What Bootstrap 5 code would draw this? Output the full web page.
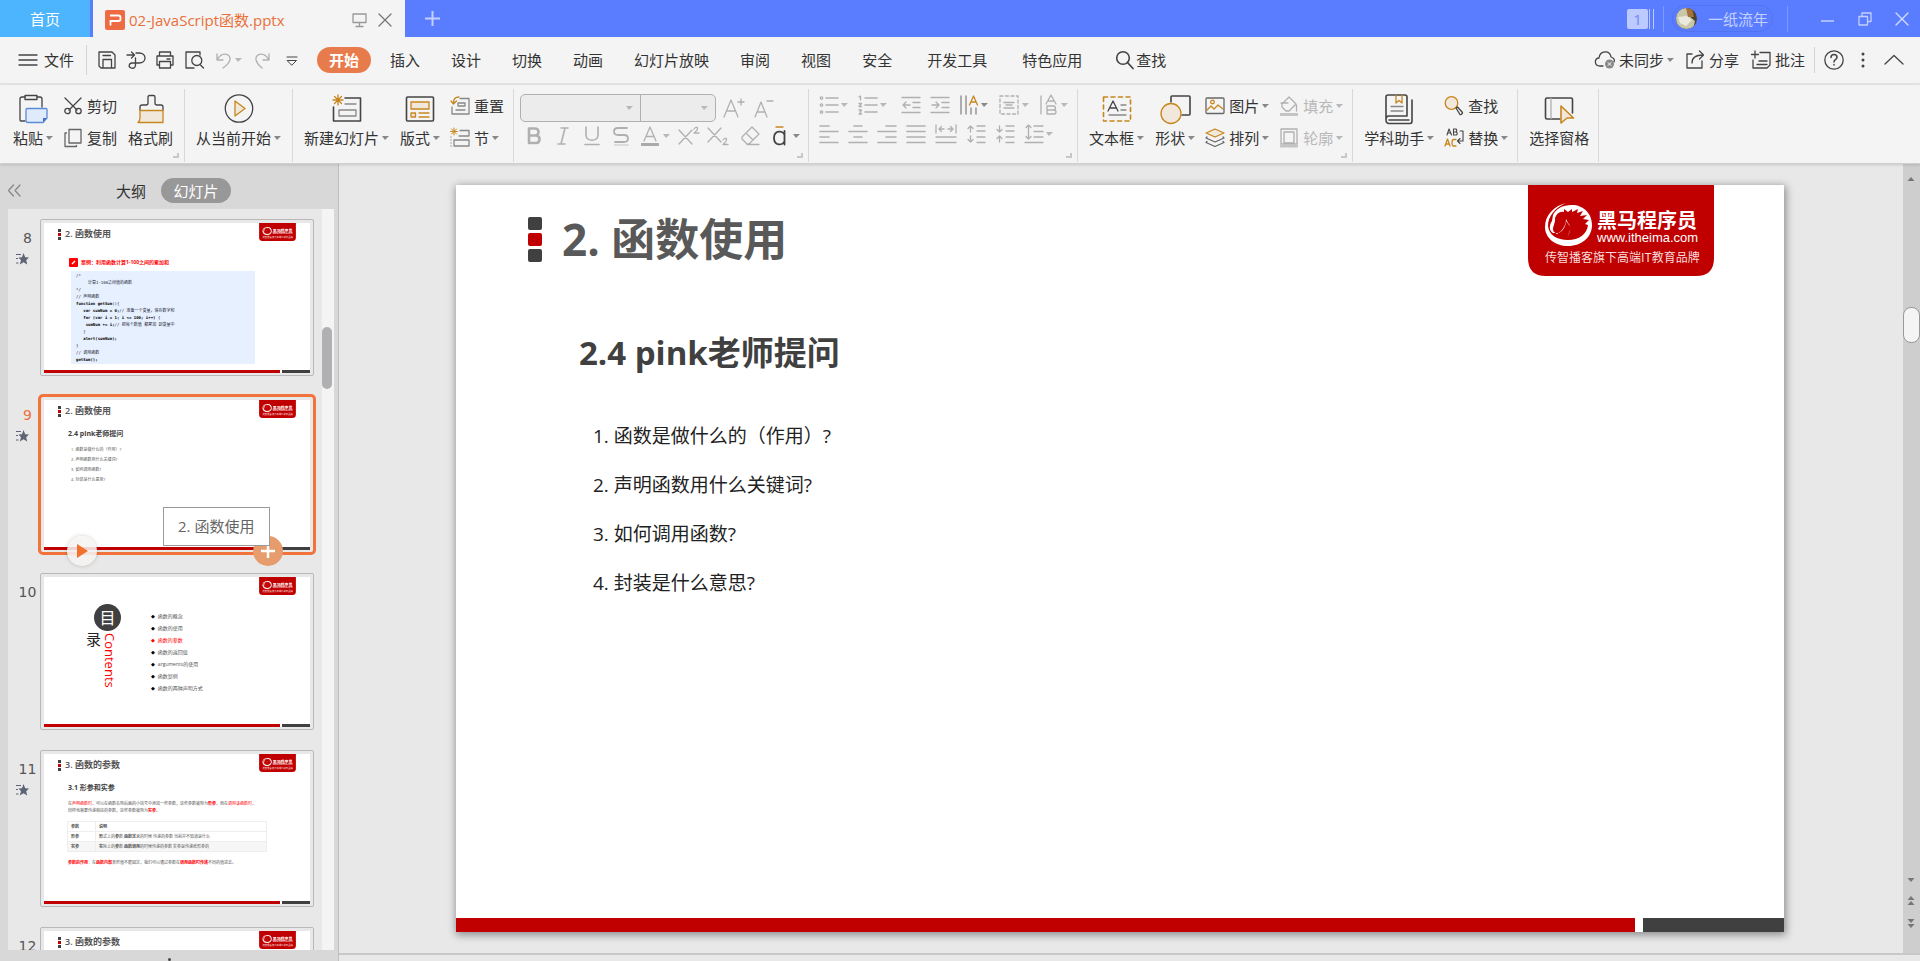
<!DOCTYPE html>
<html lang="zh-CN">
<head>
<meta charset="utf-8">
<meta name="viewport" content="width=device-width, initial-scale=1">
<title>02-JavaScript函数.pptx</title>
<link href="https://cdn.jsdelivr.net/npm/bootstrap@5.3.0/dist/css/bootstrap.min.css" rel="stylesheet">
<style>
  body { font-family: "Open Sans", "Noto Sans CJK SC", sans-serif; font-size: 15px; line-height: 22px; color: #333; background: #e8e8e8; }
  button { border: 0; background: none; padding: 0; color: inherit; font: inherit; display: inline-flex; align-items: center; white-space: nowrap; flex-shrink: 0; }
  svg { flex-shrink: 0; overflow: visible; }
  .ln { fill: none; stroke: #444; stroke-width: 1.3; stroke-linecap: round; stroke-linejoin: round; }
  .gy { stroke: #b0b0b0; }
  .md { stroke: #888; }
  .og { stroke: #c8861f; }
  .of { stroke: #c8861f; fill: #f1e8db; }
  .i18 { width: 18px; height: 18px; }
  .i20 { width: 20px; height: 18px; }
  .i30 { width: 30px; height: 32px; }
  .caret::after { content: ""; border: 4px solid transparent; border-top-color: #888; border-bottom: 0; border-left-width: 3px; border-right-width: 4px; margin-left: 3px; }
  .off { color: #b8b8b8; }
  .off.caret::after { border-top-color: #b8b8b8; }

  .titlebar { height: 37px; background: #5a7dff; color: #c3d0ff; }
  .tab-home { width: 90px; background: #4db5fe; color: #fff; justify-content: center; align-self: stretch; }
  .tab-file { width: 312px; margin-left: 3px; padding: 2px 14px 0 12px; background: #f4f4f4; color: #e8703a; align-self: stretch; }
  .bar-v { width: 1px; height: 26px; background: #7d99ff; }
  .badge-n { width: 21px; height: 20px; border-radius: 2px; background: #bccaff; color: #6c8aff; text-align: center; line-height: 20px; }
  .badge-lines { width: 5px; height: 20px; margin-left: 1px; border-left: 1px solid #bccaff; border-right: 1px solid #bccaff; }
  .user-pill { height: 27px; padding: 0 4px 0 3px; gap: 11px; border: 1px solid #5173f2; border-radius: 14px; }

  .menubar { height: 48px; background: #f4f4f4; border-bottom: 2px solid #e5e5e5; padding: 0 17px 0 19px; }
  .sep { width: 1px; background: #d4d4d4; flex-shrink: 0; }
  .quick { gap: 11px; }
  .menus { gap: 31px; margin-left: 19px; }
  .pill-on { height: 26px; width: 54px; border-radius: 13px; background: #e87b4b; color: #fff; font-weight: 700; justify-content: center; margin-left: 17px; }

  .ribbon { height: 79px; background: #f4f4f4; border-bottom: 1px solid #cfcfcf; position: relative; z-index: 2; box-shadow: 0 1px 3px #0002; }
  .grp { padding: 4px 9px 0 11px; gap: 11px; border-right: 1px solid #d9d9d9; height: 73px; margin-top: 4px; position: relative; flex-shrink: 0; }
  .grp.wide { padding-right: 11px; }
  .grp.first { padding-left: 13px; }
  .grp.font { padding-left: 6px; padding-right: 8px; }
  .grp.corner::after { content: ""; position: absolute; right: 5px; bottom: 4px; width: 6px; height: 5px; border: solid #c8c8c8; border-width: 0 2px 2px 0; }
  .big { flex-direction: column; gap: 2px; align-self: flex-start; }
  .big span { display: inline-flex; align-items: center; }
  .pair { display: flex; flex-direction: column; gap: 8px; padding-top: 1px; }
  .pair.tight { gap: 2px; }
  .pair.snug { gap: 5px; padding-top: 0; }
  .pair button { height: 24px; gap: 0; }
  .pair button svg.t { margin-right: 5px; }
  .pair .line-row { display: flex; height: 24px; align-items: center; }
  .combo { width: 196px; height: 28px; border: 1px solid #b0b0b0; border-radius: 5px; background: #ececec; overflow: hidden; }
  .pick { appearance: none; border: 0; border-radius: 0; height: 26px; background: transparent; }
  .pick-wrap { display: flex; align-items: center; padding-right: 7px; }

  .side { width: 338px; background: #d8d8d8; flex-shrink: 0; }
  .side-head { height: 45px; padding: 8px 0 0 8px; flex-shrink: 0; }
  .seg-on { height: 25px; width: 70px; border-radius: 13px; background: #989898; color: #fff; justify-content: center; margin-left: 15px; }
  .side-list { margin: 0 4px 0 8px; background: #e8e8e8; overflow: hidden; min-height: 0; }
  .side-scroll { width: 12px; background: #f4f4f4; padding-top: 118px; flex-shrink: 0; }
  .side-thumb { width: 10px; height: 62px; border-radius: 5px; background: #b0b0b2; }
  .thumbs { padding-top: 10px; }
  .thumb-row { height: 177px; position: relative; }
  .num { width: 39px; margin-right: -7px; padding-top: 8px; font: 14px/22px "DejaVu Sans", sans-serif; color: #555; flex-shrink: 0; text-align: center; }
  .num.cur { color: #f0713a; }
  .num svg { display: block; margin: 4px auto 0 8px; }
  .frame { width: 274px; height: 157px; border: 1px solid #b8b8b8; border-radius: 2px; padding: 3px; background: #e8e8e8; }
  .frame.cur { border: 3px solid #f3733c; border-radius: 5px; width: 278px; height: 161px; margin: -2px; }
  .sheet { background: #fff; position: relative; display: flex; flex-direction: column; }
  .sheet.mini { width: 266px; height: 150px; color: #555; }
  .mini .hd { height: 12px; margin: 5px 0 0 14px; gap: 4px; font: 9px/12px "Open Sans", "Noto Sans CJK SC", sans-serif; font-weight: 600; }
  .mini .sq { gap: 1px; }
  .mini .sq i { width: 3px; height: 3px; }
  .mini .logo { position: absolute; right: 14px; top: 0; width: 37px; height: 18px; }
  .mini h3 { font-size: 7px; line-height: 10px; font-weight: 700; margin: 12px 0 0 24px; color: #404040; }
  .mini .ol { font-size: 4px; line-height: 10px; margin: 6px 0 0 27px; }
  .mini .foot { height: 3px; gap: 2px; }
  .sq i { background: #404040; display: block; }
  .sq i:nth-child(2) { background: #c00000; }
  .foot { margin-top: auto; display: flex; }
  .foot b { background: #c00000; flex: 1179 1 0; }
  .foot u { background: #404040; flex: 141 1 0; }
  .case { margin: 18px 0 0 25px; gap: 3px; height: 9px; font-size: 5px; line-height: 9px; font-weight: 700; color: #f00; }
  .code { margin: 4px 0 0 27px; padding: 1px 5px; width: 184px; background: #e6f0ff; font: 4px/7px "DejaVu Sans Mono", "Noto Sans CJK SC", monospace; color: #223; overflow: hidden; }
  .code b { color: #000; }
  .toc-mark { width: 32px; margin: 27px 0 0 42px; }
  .toc-pair { gap: 2px; }
  .toc-disc { width: 27px; height: 27px; border-radius: 50%; background: #404040; color: #fff; font: 16px/27px "Noto Sans CJK SC", sans-serif; text-align: center; margin-left: 8px; }
  .toc-lu { font: 15px/16px "Noto Sans CJK SC", sans-serif; color: #222; }
  .toc-en { writing-mode: vertical-rl; font-size: 13px; line-height: 14px; color: #f00; margin-top: 2px; }
  .toc-list { margin: 33px 0 0 33px; font-size: 5px; line-height: 12px; list-style: none; padding: 0; }
  .toc-list li::before { content: "◆"; font-family: "DejaVu Sans", sans-serif; color: #000; margin-right: 3px; }
  .toc-list li.hot, .toc-list li.hot::before { color: #f00; }
  .para { font-size: 4px; line-height: 7px; margin: 7px 0 0 24px; }
  .para em, .para strong { color: #f00; font-style: normal; }
  .grid-t { margin: 7px 0 0 23px; width: 200px; font-size: 4px; line-height: 9px; border: 1px solid #eee; }
  .grid-t td, .grid-t th { padding: 0 3px; border: 1px solid #eee; }
  .grid-t th:first-child { width: 28px; }
  .grid-t tr:last-child { background: #f6f6f6; }
  .hover-play, .hover-add { position: absolute; width: 30px; height: 30px; border-radius: 50%; top: 140px; z-index: 1; justify-content: center; }
  .hover-play { left: 59px; background: #f6f4f2dd; box-shadow: 0 0 4px #0003; }
  .hover-add { left: 245px; background: #e69c6c; }
  .tip { position: absolute; left: 155px; top: 111px; width: 107px; height: 39px; padding: 7px 0 0 14px; background: #fff; border: 1px solid #9a9a9a; z-index: 2; color: #666; }

  .stage { border-left: 1px solid #bfbfbf; }
  .canvas { padding: 21px 119px 0 117px; min-height: 0; }
  .sheet.full { aspect-ratio: 1328 / 747; box-shadow: 1px 2px 8px 1px #0006; }
  .full .hd { height: 48px; margin: 30px 0 0 72px; gap: 20px; }
  .full .hd h1 { font-size: 44px; line-height: 48px; font-weight: 700; color: #595959; margin: 0; }
  .full .sq { gap: 3px; }
  .full .sq i { width: 14px; height: 13px; border-radius: 2px; }
  .full .logo { position: absolute; right: 70px; top: 0; width: 186px; height: 91px; }
  .full h2 { font-size: 33px; line-height: 44px; font-weight: 700; color: #404040; margin: 68px 0 0 123px; }
  .full .ol { font-size: 19px; line-height: 49px; color: #222; margin: 37px 0 0 137px; padding: 0; list-style: none; }
  .full .foot { height: 14px; gap: 8px; }
  .vscroll { width: 17px; background: #cecece; flex-shrink: 0; padding: 12px 0 25px; }
  .vscroll .knob { width: 17px; height: 36px; border: 1px solid #999; border-radius: 8px; background: #f4f4f4; margin-top: 125px; }
  .vscroll svg { fill: #777; display: block; }
  .stage-foot { height: 8px; border-top: 2px solid #c8c8c8; }
  .side-foot { height: 11px; }
  .dot { width: 3px; height: 3px; border-radius: 50%; background: #444; }
</style>
</head>
<body class="vh-100 d-flex flex-column overflow-hidden">

<svg class="d-none" aria-hidden="true">
  <symbol id="logo" viewBox="0 0 186 91">
    <path d="M0 0H186V73Q186 91 168 91H18Q0 91 0 73Z" fill="#c00000"/>
    <path d="M38 18C26 21 17 30 17 42C17 53 27 61 40 61C54 61 64 52 64 40C64 28 55 20 44 20C34 20 28 24 25 30L24 36C21 40 21 46 25 48L31 48C36 45 38 40 38 36L41 40C44 43 41 47 40 51C42 47 44 42 40 38L38 34C38 41 34 46 29 49L26 47C23 43 28 38 27 33C29 28 32 26 36 27L36 24L40 27L44 24L44 27L50 24L49 28L55 26L52 31L59 30L55 34L61 35L57 39L60 40C59 49 51 55 40 55C29 55 21 50 20 41C20 31 27 23 38 18Z" fill="#fff"/>
    <text x="69" y="43" font-size="20" font-weight="700" fill="#fff" font-family="Noto Sans CJK SC, sans-serif">黑马程序员</text>
    <text x="69" y="57" font-size="13" fill="#fff" font-family="Liberation Sans, sans-serif">www.itheima.com</text>
    <text x="17" y="77" font-size="12" fill="#f6dcdc" font-family="Noto Sans CJK SC, sans-serif">传智播客旗下高端IT教育品牌</text>
  </symbol>
  <symbol id="anim" viewBox="0 0 13 12">
    <path d="M7.500 0L9.200 4.200L13 4.400L10.200 7.200L11.200 11.500L7.500 9.200L3.800 11.500L5 7.200L2.500 4.400L6 4.200Z" fill="#5d6475"/>
    <path d="M0 1.500H5M0 5.500H2M0 10H2.500" stroke="#5d6475" stroke-width="1"/>
  </symbol>
</svg>

<header class="titlebar d-flex align-items-center flex-shrink-0">
  <button class="tab-home">首页</button>
  <div class="tab-file d-flex align-items-center">
    <svg width="20" height="20" viewBox="0 0 20 20"><rect width="20" height="20" rx="2" fill="#ee6a42"/><path d="M5 5.500H13.500Q15.500 5.500 15.500 7.500V9Q15.500 11 13.500 11H5.500V15.500" fill="none" stroke="#fff" stroke-width="1.800"/></svg>
    <span class="ms-1">02-JavaScript函数.pptx</span>
    <svg class="ms-auto" width="15" height="14" viewBox="0 0 15 14"><path d="M1 1H14V9.500H1ZM7.500 9.500V13M4 13.500H11" class="ln" style="stroke:#999"/></svg>
    <button class="ms-2 ps-1" aria-label="关闭标签"><svg width="12" height="12" viewBox="0 0 12 12"><path d="M0 0L12 12M12 0L0 12" class="ln" style="stroke:#777"/></svg></button>
  </div>
  <button style="margin-left:20px" aria-label="新建"><svg width="15" height="15" viewBox="0 0 15 15"><path d="M7.500 0V15M0 7.500H15" stroke="#c3d0ff" stroke-width="2"/></svg></button>
  <div class="ms-auto d-flex align-items-center">
    <div class="badge-n">1</div><div class="badge-lines"></div>
    <div class="bar-v" style="margin:0 8px 0 9px"></div>
    <button class="user-pill">
      <svg width="21" height="21" viewBox="0 0 21 21"><defs><clipPath id="av"><circle cx="10.500" cy="10.500" r="10.500"/></clipPath></defs><g clip-path="url(#av)"><rect width="21" height="21" fill="#4a4330"/><path d="M0 0H11L13 8L19 13L17 21H3L0 16Z" fill="#c9c8a8"/><path d="M10 0H16L18 9L12 9Z" fill="#a5713c"/><path d="M2 9L11 8L16 12L10 18L4 15Z" fill="#eceade"/></g></svg>
      <span>一纸流年</span>
    </button>
    <div class="bar-v" style="margin-left:14px"></div>
    <button style="margin-left:33px" aria-label="最小化"><svg width="13" height="13" viewBox="0 0 13 13"><path d="M0 9H13" stroke="#c3d0ff" stroke-width="1.500"/></svg></button>
    <button class="ms-4" aria-label="还原"><svg width="14" height="14" viewBox="0 0 14 14"><path d="M1 4.500H9.500V13H1ZM4 4V1H13V9.500H10" class="ln" style="stroke:#c3d0ff"/></svg></button>
    <button class="ms-4 me-2 pe-1" aria-label="关闭"><svg width="12" height="12" viewBox="0 0 12 12"><path d="M0 0L12 12M12 0L0 12" class="ln" style="stroke:#d4deff"/></svg></button>
  </div>
</header>

<nav class="menubar d-flex align-items-center flex-shrink-0">
  <button><svg class="i18" viewBox="0 0 18 18" style="margin-right:7px"><path d="M0 4H18M0 9H18M0 14H18" class="ln"/></svg>文件</button>
  <div class="sep" style="height:30px;margin:0 11px 0 12px"></div>
  <div class="quick d-flex align-items-center">
    <button aria-label="保存"><svg class="i18" viewBox="0 0 18 18"><path d="M1 1H14L17 4V17H3L1 15ZM5 17V8.500H13.500V17M5 4.500H12.500" class="ln"/></svg></button>
    <button aria-label="输出为PDF"><svg class="i18" viewBox="0 0 18 18"><path d="M0 4H7M4.500 1L7.500 4L4.500 7M9 2H12C20 2 20 12 12 12H5C2 12 1 16 4 17C7 18 9 16 8.500 13V7" class="ln"/></svg></button>
    <button aria-label="打印"><svg class="i18" viewBox="0 0 18 18"><path d="M3.500 5V1H14.500V5M3.500 14H1V5H17V14H14.500M3.500 10.500H14.500V17H3.500ZM11 8H14" class="ln"/></svg></button>
    <button aria-label="打印预览"><svg class="i18" viewBox="0 0 18 18"><path d="M9 17H1V1H15V4M15.500 14L18.500 17" class="ln"/><circle cx="11.800" cy="9.500" r="5" class="ln"/></svg></button>
    <button class="off caret" aria-label="撤销"><svg class="i18" viewBox="0 0 18 18"><path d="M3 3V9H9M3 9C6 3 11 2 14 4C18 7 16 12 9 17" class="ln gy"/></svg></button>
    <button aria-label="恢复"><svg class="i18" viewBox="0 0 18 18"><path d="M16 3V9H10M16 9C13 3 8 2 5 4C1 7 3 12 9 17" class="ln gy"/></svg></button>
    <button aria-label="更多"><svg class="i18" viewBox="0 0 18 18"><path d="M5 6H15M5.500 9.500H14.500L10 14Z" class="ln" style="stroke-width:1"/></svg></button>
  </div>
  <button class="pill-on">开始</button>
  <div class="menus d-flex align-items-center">
    <button>插入</button><button>设计</button><button>切换</button><button>动画</button><button>幻灯片放映</button><button>审阅</button><button>视图</button><button>安全</button>
    <button class="ms-1">开发工具</button><button class="ms-1">特色应用</button>
    <button style="margin-left:3px"><svg class="i18" viewBox="0 0 18 18" style="margin-right:2px"><circle cx="7" cy="7" r="6.300" class="ln" style="stroke-width:1.600"/><path d="M11.500 11.500L17 17.500" class="ln" style="stroke-width:1.800"/></svg>查找</button>
  </div>
  <div class="ms-auto d-flex align-items-center">
    <button class="caret"><svg class="i20" viewBox="0 0 20 18" style="margin-right:4px"><path d="M8 15H5C-1 15 -1 7 4 7C5 -1 15 -1 16 6C19 7 20 9 19 11" class="ln"/><circle cx="14.500" cy="13" r="4.500" fill="#888"/><path d="M12.800 11.300L16.200 14.700M16.200 11.300L12.800 14.700" stroke="#fff"/></svg>未同步</button>
    <button style="margin-left:12px"><svg class="i18" viewBox="0 0 18 18" style="margin-right:5px"><path d="M6 3H1V17H16V10M6 12C6 6 10 4 17 4M13.500 0L17.500 4L13.500 8" class="ln"/></svg>分享</button>
    <button style="margin-left:13px"><svg class="i18" viewBox="0 0 18 18" style="margin-right:5px"><path d="M8 1.500H18V14L15 17H1V9M3 0V7M-.500 3.500H6.500M5 13.500H15M7 10H15" class="ln"/></svg>批注</button>
    <div class="sep" style="height:26px;margin:0 9px"></div>
    <button aria-label="帮助"><svg width="20" height="20" viewBox="0 0 20 20"><circle cx="10" cy="10" r="9.200" class="ln"/><path d="M7 7.500C7 3.500 13 3.500 13 7.500C13 9.500 10 9.500 10 12M10 14.500V15" class="ln" style="stroke-width:1.500"/></svg></button>
    <button style="margin:0 20px 0 17px" aria-label="选项"><svg width="4" height="16" viewBox="0 0 4 16" fill="#444"><circle cx="2" cy="2" r="1.500"/><circle cx="2" cy="8" r="1.500"/><circle cx="2" cy="14" r="1.500"/></svg></button>
    <button aria-label="折叠功能区"><svg class="i18" viewBox="0 0 18 18"><path d="M0 13L9 4.500L18 13" class="ln"/></svg></button>
  </div>
</nav>

<section class="ribbon d-flex flex-shrink-0">
  <div class="grp first wide corner d-flex">
    <button class="big"><svg class="i30" viewBox="0 0 30 32"><path d="M7 28H3Q2 28 2 27V6Q2 4 4 4H7M19 4H22Q24 4 24 6V14" class="ln"/><rect x="7" y="2.500" width="12" height="4" class="ln"/><path d="M9 15.500H28Q29 15.500 29 16.500V25L25 29.500H10Q8 29.500 8 27.500V17Q8 15.500 9 15.500Z" fill="#dfeafa" stroke="#5b8bd6" stroke-width="1.300"/><path d="M29 25H25V29.500Z" fill="#3f74cc"/></svg><span class="caret">粘贴</span></button>
    <div class="pair">
      <button><svg class="i18 t" viewBox="0 0 18 18"><path d="M1 1L13 13M17 1L5 13" class="ln"/><circle cx="3.500" cy="14" r="2.700" class="ln"/><circle cx="14.500" cy="14" r="2.700" class="ln"/></svg>剪切</button>
      <button><svg class="i18 t" viewBox="0 0 18 18"><path d="M5 0.500H17V14H5ZM2.500 4H1V17.500H12.500V16.500" class="ln" style="stroke:#666"/></svg>复制</button>
    </div>
    <button class="big"><svg class="i30" viewBox="0 0 30 32"><path d="M4 17V14Q4 12 6 12H10Q12 12 12 10V4Q12 2.500 13.500 2.500H17.500Q19 2.500 19 4V10Q19 12 21 12H25Q27 12 27 14V17" class="ln"/><path d="M4 17.500H27V29.500H2Q4 28 4 25Z" class="ln of"/></svg><span>格式刷</span></button>
  </div>
  <div class="grp wide d-flex">
    <button class="big"><svg class="i30" viewBox="0 0 30 32"><circle cx="15" cy="15.500" r="13.700" class="ln"/><path d="M11 8L21 15.500L11 23Z" class="ln of"/></svg><span class="caret">从当前开始</span></button>
  </div>
  <div class="grp d-flex">
    <button class="big"><svg class="i30" viewBox="0 0 30 32"><path d="M13 5H28.500V28H1.500V14" class="ln" style="stroke-width:1.600"/><rect x="7" y="17" width="17" height="6" class="ln md"/><path d="M13 11H24" class="ln md"/><path d="M6 2V12M1 7H11M2.500 3.500L9.500 10.500M9.500 3.500L2.500 10.500" class="ln og"/></svg><span class="caret">新建幻灯片</span></button>
    <button class="big"><svg class="i30" viewBox="0 0 30 32"><rect x="1.500" y="4" width="27" height="24" rx="1" class="ln" style="stroke-width:1.600"/><rect x="6" y="9" width="18" height="7" class="ln of"/><rect x="6" y="20" width="4.500" height="4" class="ln of"/><path d="M14 20H24M14 24H24" class="ln og"/></svg><span class="caret">版式</span></button>
    <div class="pair">
      <button><svg class="i18 t" viewBox="0 0 18 18"><path d="M9 1.500H18V17H1V10M7 6H14V9H7ZM5 13H14" class="ln md"/><path d="M8 0C4 0 2.500 2 2.500 6M0 4L2.500 7L5.500 4" class="ln og"/></svg>重置</button>
      <button class="caret"><svg class="i18 t" viewBox="0 0 18 18"><path d="M9 1.500H18V7H8M3 11H18V17H3ZM0 11V11.100M0 14V14.100M0 17V17.100M0 8V8.100" class="ln md"/><path d="M3 -1V6M-.500 2.500H6.500M.500 0L5.500 5M5.500 0L.500 5" class="ln og" style="stroke-width:1"/></svg>节</button>
    </div>
  </div>
  <div class="grp font corner d-flex">
    <div class="pair tight">
      <div class="d-flex align-items-center" style="height:28px">
        <div class="combo d-flex">
          <label class="pick-wrap off caret" style="width:120px;border-right:1px solid #b0b0b0"><select class="pick w-100" aria-label="字体" disabled><option></option></select></label>
          <label class="pick-wrap off caret flex-fill"><select class="pick w-100" aria-label="字号" disabled><option></option></select></label>
        </div>
        <button class="ms-2" aria-label="增大字号"><svg class="i20" viewBox="0 0 20 18"><path d="M0 18L7 1L14 18M2.500 12H11.500M17 0V6M14 3H20" class="ln gy"/></svg></button>
        <button style="margin-left:11px" aria-label="减小字号"><svg class="i20" viewBox="0 0 20 18"><path d="M0 18L6 3L12 18M2 13H10M12 2H18" class="ln gy"/></svg></button>
      </div>
      <div class="line-row" style="gap:9px;padding-left:4px">
        <button aria-label="加粗"><svg class="i20" viewBox="0 0 20 18"><path d="M5 1.500H11Q14.500 1.500 14.500 5Q14.500 8.500 11 8.500H5ZM5 8.500H12Q15.500 8.500 15.500 12.300Q15.500 16 12 16H5Z" class="ln gy" style="stroke-width:2.600"/></svg></button>
        <button aria-label="倾斜"><svg class="i20" viewBox="0 0 20 18"><path d="M8 1H15M5 17H12M12 1L8 17" class="ln gy" style="stroke-width:1.600"/></svg></button>
        <button aria-label="下划线"><svg class="i20" viewBox="0 0 20 18"><path d="M4 0V8C4 15 16 15 16 8V0M3 17.500H17" class="ln gy" style="stroke-width:1.600"/></svg></button>
        <button aria-label="文字阴影"><svg class="i20" viewBox="0 0 20 18"><path d="M17 18H4" class="ln" style="stroke:#dcdcdc;stroke-width:2"/><path d="M16 1H7Q3 1 3 4.500Q3 8 7 8H13Q17 8 17 11.500Q17 15 13 15H4" class="ln gy" style="stroke-width:1.800"/></svg></button>
        <button class="off caret" aria-label="字体颜色"><svg class="i20" viewBox="0 0 20 18"><path d="M4 14L10 0L16 14M6 9.500H14" class="ln gy"/><path d="M1 17.500H19" stroke="#aaa" stroke-width="3"/></svg></button>
        <button aria-label="上标"><svg class="i20" viewBox="0 0 20 18"><path d="M0 3L13 17M13 3L0 17M15 2Q17 -1 18.500 1Q19 3 15 6H20" class="ln gy"/></svg></button>
        <button aria-label="下标"><svg class="i20" viewBox="0 0 20 18"><path d="M0 1L13 15M13 1L0 15M15 13Q17 10 18.500 12Q19 14 15 17.500H20" class="ln gy"/></svg></button>
        <button class="ms-1" aria-label="清除格式"><svg class="i20" viewBox="0 0 20 18"><path d="M1 10L11 0L18 7L8 17H6L1 12ZM5 6L12 13M6 17.500H18" class="ln gy"/></svg></button>
        <button class="caret" aria-label="拼音指南"><svg class="i20" viewBox="0 0 20 18"><path d="M14.500 4V17.500M14.500 8C13 3 4 3 4 11C4 19 13 19 14.500 14" class="ln" style="stroke-width:1.800"/><path d="M6 0H13" class="ln og"/></svg></button>
      </div>
    </div>
  </div>
  <div class="grp corner d-flex">
    <div class="pair snug">
      <div class="line-row" style="gap:11px">
        <button class="off caret" aria-label="项目符号"><svg class="i18" viewBox="0 0 18 18"><path d="M6 2H18M6 9H18M6 16H18" class="ln gy" style="stroke-width:1.600"/><g class="ln gy"><circle cx="1.500" cy="2" r="1.200"/><circle cx="1.500" cy="9" r="1.200"/><circle cx="1.500" cy="16" r="1.200"/></g></svg></button>
        <button class="off caret" aria-label="编号"><svg class="i18" viewBox="0 0 18 18"><path d="M6 2H18M6 9H18M6 16H18" class="ln gy" style="stroke-width:1.600"/><path d="M0 1L1.500 0V4M0 7.500H2.500L0 10.500H2.500M0 14H2.500L1 16L2.500 18H0" class="ln gy"/></svg></button>
        <button class="ms-1" aria-label="减少缩进"><svg class="i18" viewBox="0 0 18 18"><path d="M0 1.500H18M11 6.500H18M11 11.500H18M0 16.500H18M8 9H1M4 6L1 9L4 12" class="ln gy"/></svg></button>
        <button aria-label="增加缩进"><svg class="i18" viewBox="0 0 18 18"><path d="M0 1.500H18M11 6.500H18M11 11.500H18M0 16.500H18M1 9H8M5 6L8 9L5 12" class="ln gy"/></svg></button>
        <button class="caret" aria-label="文字方向"><svg class="i18" viewBox="0 0 18 18"><path d="M1 0V18M6 0V18M11 12V18M16 12V18" class="ln md"/><path d="M9.500 9L13.500 0L17.500 9M11 6H16" class="ln og"/></svg></button>
        <button class="off caret" aria-label="对齐文本"><svg class="i20" viewBox="0 0 20 18"><rect x="1" y="0" width="18" height="18" class="ln gy" stroke-dasharray="3 2.500"/><path d="M5 6.500H15M7 9H13M5 12H15" class="ln gy"/></svg></button>
        <button class="off caret" aria-label="字符间距"><svg class="i18" viewBox="0 0 18 18"><path d="M1 0V18M6 8L11 -1L16 8M8 5H14M7 10H13Q15.500 10 15.500 12Q15.500 14 13 14H7ZM7 14H14Q16 14 16 16Q16 18 14 18H7Z" class="ln gy"/></svg></button>
      </div>
      <div class="line-row" style="gap:11px">
        <button aria-label="左对齐"><svg class="i18" viewBox="0 0 18 18"><path d="M0 1H9M0 6.500H18M0 12H9M0 17.500H18" class="ln gy" style="stroke-width:1.600"/></svg></button>
        <button aria-label="居中"><svg class="i18" viewBox="0 0 18 18"><path d="M5 1H13M0 6.500H18M5 12H13M0 17.500H18" class="ln gy" style="stroke-width:1.600"/></svg></button>
        <button aria-label="右对齐"><svg class="i18" viewBox="0 0 18 18"><path d="M8 1H18M0 6.500H18M8 12H18M0 17.500H18" class="ln gy" style="stroke-width:1.600"/></svg></button>
        <button aria-label="两端对齐"><svg class="i18" viewBox="0 0 18 18"><path d="M0 1H18M0 6.500H18M0 12H18M0 17.500H18" class="ln gy" style="stroke-width:1.600"/></svg></button>
        <button aria-label="分散对齐"><svg class="i20" viewBox="0 0 20 18"><path d="M0 0V8M20 0V8M3 4H8M12 4H17M5.500 1.500L3 4L5.500 6.500M14.500 1.500L17 4L14.500 6.500M0 12H20M0 17.500H20" class="ln gy"/></svg></button>
        <button aria-label="增大段落间距"><svg class="i18" viewBox="0 0 18 18"><path d="M10 1H18M10 6H18M10 12H18M10 17.500H18M3.500 7V1M1 3.500L3.500 1L6 3.500M3.500 11V17M1 14.500L3.500 17L6 14.500" class="ln gy"/></svg></button>
        <button aria-label="减小段落间距"><svg class="i18" viewBox="0 0 18 18"><path d="M10 1H18M10 6H18M10 12H18M10 17.500H18M3.500 7V1M1 4.500L3.500 7L6 4.500M3.500 17V11M1 13.500L3.500 11L6 13.500" class="ln gy"/></svg></button>
        <button class="off caret" aria-label="行距"><svg class="i18" viewBox="0 0 18 18"><path d="M9 1H18M9 6.500H18M9 12H18M0 17.500H18M3.500 14V0M1 2.500L3.500 0L6 2.500M1 11.500L3.500 14L6 11.500" class="ln gy"/></svg></button>
      </div>
    </div>
  </div>
  <div class="grp corner d-flex">
    <button class="big"><svg class="i30" viewBox="0 0 30 32"><rect x="1.500" y="4" width="27" height="24" class="ln og" style="stroke-width:1.600" stroke-dasharray="4 3.500"/><path d="M6 18L11 8L16 18M7.500 15H14.500" class="ln"/><path d="M19 12H24M19 17H24M7 22H24" class="ln md"/></svg><span class="caret">文本框</span></button>
    <button class="big"><svg class="i30" viewBox="0 0 30 32"><path d="M11 9V4Q11 3 12 3H29Q30 3 30 4V21Q30 22 29 22H22" class="ln" style="stroke-width:1.600"/><circle cx="11" cy="20.500" r="10" class="ln of"/></svg><span class="caret">形状</span></button>
    <div class="pair">
      <button class="caret"><svg class="i18 t" viewBox="0 0 18 18"><rect x="0" y="1" width="18" height="15.500" rx="1" class="ln" style="stroke:#666"/><path d="M1 13L5 9L8 12L12 8L17 12" class="ln og"/><circle cx="6.500" cy="5" r="1.800" class="ln og"/></svg>图片</button>
      <button class="caret"><svg class="i18 t" viewBox="0 0 18 18"><path d="M0 4L9 0L18 4L9 8Z" class="ln of"/><path d="M1 8L0 9L9 13L18 9L17 8M1 12.500L0 13.500L9 17.500L18 13.500L17 12.500" class="ln" style="stroke:#666"/></svg>排列</button>
    </div>
    <div class="pair">
      <button class="off caret"><svg class="i18 t" viewBox="0 0 18 18"><path d="M2 7L9 0L16 7L9 14L6 14L2 10ZM1 6H8M16.500 8V14" class="ln gy"/><path d="M0 17.500H18" stroke="#c4c4c4" stroke-width="3"/></svg>填充</button>
      <button class="off caret"><svg class="i18 t" viewBox="0 0 18 18"><path d="M1 0H17V15H1ZM4 3H14V14H4Z" class="ln gy"/><path d="M0 17H18" stroke="#c4c4c4" stroke-width="3"/></svg>轮廓</button>
    </div>
  </div>
  <div class="grp d-flex">
    <button class="big"><svg class="i30" viewBox="0 0 30 32"><path d="M2 27V4Q2 2 4 2H21Q23 2 23 4V23H5Q2 23 2 26.500Q2 30.500 5 30.500H26Q28 30.500 28 28V7M5 27H25" class="ln" style="stroke-width:1.600"/><path d="M12 2V10L15 7.500L18 10V2" class="ln og"/><path d="M7 13.500H19M7 18H19" class="ln md"/></svg><span class="caret">学科助手</span></button>
    <div class="pair">
      <button><svg class="i18 t" viewBox="0 0 18 18"><circle cx="6.500" cy="6" r="6.300" class="ln of"/><path d="M11 11L12.500 10L17.500 15.500Q17 18 15 17.500Z" class="ln"/></svg>查找</button>
      <button class="caret"><svg class="i18 t" viewBox="0 0 18 18"><path d="M2 6L4 0L6.500 6M3 4H6M8.500 0H11Q12.500 1.500 11 3H8.500ZM8.500 3H11.500Q13 4.500 11.500 6H8.500ZM15 2H18V12H13M15 9.500L12.500 12L15 14.500" class="ln" style="stroke-width:1.100"/><path d="M0 17L2.500 10L5 17M1 15H4M11 10.500H8.500Q7 10.500 7 13.500Q7 17 8.500 17H11" class="ln og"/></svg>替换</button>
    </div>
  </div>
  <div class="grp d-flex">
    <button class="big"><svg class="i30" viewBox="0 0 30 32"><path d="M16 26H3Q1.500 26 1.500 24.500V6.500Q1.500 5 3 5H27Q28.500 5 28.500 6.500V20" class="ln" style="stroke-width:1.600"/><path d="M7 5.500V25.500" class="ln gy"/><path d="M17 13L29.500 25H23L17 30Z" class="ln of" style="stroke-width:1.600"/></svg><span>选择窗格</span></button>
  </div>
</section>

<main class="d-flex flex-fill" style="min-height:0">
  <aside class="side d-flex flex-column">
    <div class="side-head d-flex align-items-center">
      <button aria-label="收起"><svg width="13" height="11" viewBox="0 0 13 11"><path d="M5.500 0L.500 5.500L5.500 11M12 0L7 5.500L12 11" class="ln md"/></svg></button>
      <button style="margin-left:95px">大纲</button><button class="seg-on">幻灯片</button>
    </div>
    <div class="side-list d-flex flex-fill">
      <div class="thumbs flex-fill">
        <div class="thumb-row d-flex">
          <div class="num">8<svg width="13" height="12"><use href="#anim"/></svg></div>
          <div class="frame"><div class="sheet mini">
            <svg class="logo"><use href="#logo"/></svg>
            <div class="hd d-flex align-items-center"><div class="sq d-flex flex-column"><i></i><i></i><i></i></div>2. 函数使用</div>
            <div class="case d-flex"><svg width="9" height="9" viewBox="0 0 9 9"><rect width="9" height="9" rx="1" fill="#f00"/><path d="M3 6L6 3" stroke="#fff" stroke-width="1.500"/></svg>案例：利用函数计算1-100之间的累加和</div>
            <div class="code">/*<br>&emsp;&emsp;&emsp;&nbsp;&nbsp;计算1-100之间值的函数<br>*/<br>// 声明函数<br><b>function getSum</b>(){<br>&emsp;&nbsp;&nbsp;<b>var sumNum = 0;</b>// 准备一个变量，保存数字和<br>&emsp;&nbsp;&nbsp;<b>for (var i = 1; i &lt;= 100; i++)</b> {<br>&emsp;&emsp;&emsp;&nbsp;<b>sumNum += i;</b>// 把每个数值 都累加 到变量中<br>&emsp;&nbsp;&nbsp;}<br>&emsp;&nbsp;&nbsp;<b>alert(sumNum);</b><br>}<br>// 调用函数<br><b>getSum();</b></div>
            <div class="foot"><b></b><u></u></div>
          </div></div>
        </div>
        <div class="thumb-row d-flex">
          <div class="num cur">9<svg width="13" height="12"><use href="#anim"/></svg></div>
          <div class="frame cur"><div class="sheet mini">
            <svg class="logo"><use href="#logo"/></svg>
            <div class="hd d-flex align-items-center"><div class="sq d-flex flex-column"><i></i><i></i><i></i></div>2. 函数使用</div>
            <h3>2.4 pink老师提问</h3>
            <div class="ol">1. 函数是做什么的（作用）?<br>2. 声明函数用什么关键词?<br>3. 如何调用函数?<br>4. 封装是什么意思?</div>
            <div class="foot"><b></b><u></u></div>
          </div></div>
          <button class="hover-play" aria-label="从此页放映"><svg width="11" height="14" viewBox="0 0 11 14"><path d="M0 0L11 7L0 14Z" fill="#f0702c"/></svg></button>
          <button class="hover-add" aria-label="新建幻灯片"><svg width="14" height="14" viewBox="0 0 14 14"><path d="M7 0V14M0 7H14" stroke="#fff" stroke-width="2.500"/></svg></button>
          <div class="tip">2. 函数使用</div>
        </div>
        <div class="thumb-row d-flex">
          <div class="num">10</div>
          <div class="frame"><div class="sheet mini">
            <svg class="logo"><use href="#logo"/></svg>
            <div class="d-flex">
              <div class="toc-mark"><div class="toc-disc">目</div><div class="toc-pair d-flex"><span class="toc-lu">录</span><span class="toc-en">Contents</span></div></div>
              <ul class="toc-list"><li>函数的概念</li><li>函数的使用</li><li class="hot">函数的参数</li><li>函数的返回值</li><li>arguments的使用</li><li>函数案例</li><li>函数的两种声明方式</li></ul>
            </div>
            <div class="foot"><b></b><u></u></div>
          </div></div>
        </div>
        <div class="thumb-row d-flex">
          <div class="num">11<svg width="13" height="12"><use href="#anim"/></svg></div>
          <div class="frame"><div class="sheet mini">
            <svg class="logo"><use href="#logo"/></svg>
            <div class="hd d-flex align-items-center"><div class="sq d-flex flex-column"><i></i><i></i><i></i></div>3. 函数的参数</div>
            <h3>3.1 形参和实参</h3>
            <div class="para">在<em>声明函数时</em>，可以在函数名称后面的小括号中添加一些参数，这些参数被称为<strong>形参</strong>，而在<em>调用该函数时</em>，<br>同样也需要传递相应的参数，这些参数被称为<strong>实参</strong>。</div>
            <table class="grid-t"><tr><th>参数</th><th>说明</th></tr><tr><th>形参</th><td><b>形</b>式上的<b>参</b>数 <b>函数定义</b>的时候 传递的参数 当前并不知道是什么</td></tr><tr><th>实参</th><td><b>实</b>际上的<b>参</b>数 <b>函数调用</b>的时候传递的参数 实参是传递给形参的</td></tr></table>
            <div class="para"><strong>参数的作用</strong>：在<strong>函数内部</strong>某些值不能固定，我们可以通过参数在<strong>调用函数时传递</strong>不同的值进去。</div>
            <div class="foot"><b></b><u></u></div>
          </div></div>
        </div>
        <div class="thumb-row d-flex">
          <div class="num">12</div>
          <div class="frame"><div class="sheet mini">
            <svg class="logo"><use href="#logo"/></svg>
            <div class="hd d-flex align-items-center"><div class="sq d-flex flex-column"><i></i><i></i><i></i></div>3. 函数的参数</div>
          </div></div>
        </div>
      </div>
      <div class="side-scroll"><div class="side-thumb"></div></div>
    </div>
    <div class="side-foot d-flex justify-content-center align-items-end flex-shrink-0"><div class="dot"></div></div>
  </aside>

  <div class="stage flex-fill d-flex flex-column">
    <div class="d-flex flex-fill" style="min-height:0">
      <div class="canvas flex-fill">
        <article class="sheet full">
          <svg class="logo"><use href="#logo"/></svg>
          <div class="hd d-flex align-items-center"><div class="sq d-flex flex-column"><i></i><i></i><i></i></div><h1>2. 函数使用</h1></div>
          <h2>2.4 pink老师提问</h2>
          <ul class="ol"><li>1. 函数是做什么的（作用）?</li><li>2. 声明函数用什么关键词?</li><li>3. 如何调用函数?</li><li>4. 封装是什么意思?</li></ul>
          <div class="foot"><b></b><u></u></div>
        </article>
      </div>
      <div class="vscroll d-flex flex-column">
        <svg width="17" height="6" viewBox="0 0 17 6"><path d="M4.500 5L8 1L11.500 5Z"/></svg>
        <div class="knob"></div>
        <svg class="mt-auto" width="17" height="58" viewBox="0 0 17 58"><path d="M4.500 8L8 12L11.500 8ZM4.500 30L8 26L11.500 30ZM4.500 35L8 31L11.500 35ZM4.500 49L8 53L11.500 49ZM4.500 54L8 58L11.500 54Z"/></svg>
      </div>
    </div>
    <div class="stage-foot flex-shrink-0"></div>
  </div>
</main>
<script src="https://cdn.jsdelivr.net/npm/bootstrap@5.3.0/dist/js/bootstrap.bundle.min.js"></script>
</body>
</html>
